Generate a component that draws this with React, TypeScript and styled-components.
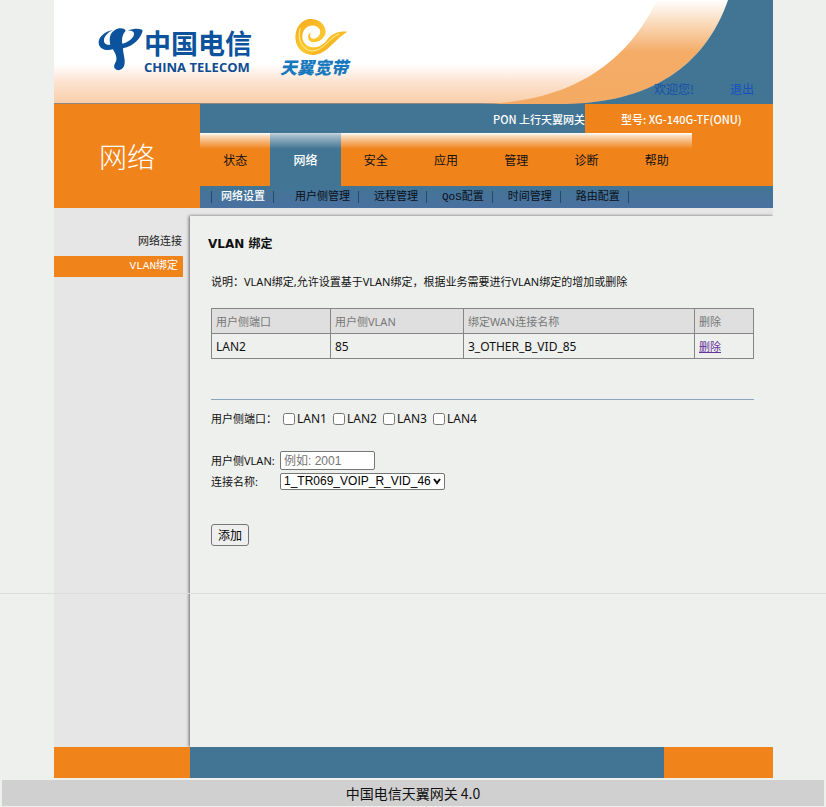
import React, { useState } from "react";
import styled, { createGlobalStyle } from "styled-components";

const orange = "#f0831a";
const blue = "#427594";
const sans = `"DejaVu Sans", "Noto Sans CJK SC", sans-serif`;
const cjk = `"Noto Sans CJK SC", sans-serif`;
const noto = `"Noto Sans", "Noto Sans CJK SC", sans-serif`;
const mono = `"Liberation Mono", "Noto Sans CJK SC", monospace`;

const GlobalStyle = createGlobalStyle`
  * { box-sizing: border-box; }
  body { margin: 0; background: #eef0ed; color: #111; font: 11px/16px ${noto}; }
`;

const Page = styled.div`
  position: relative;
  min-height: 100vh;
  display: flex;
  flex-direction: column;
`;
const FoldLine = styled.div`
  position: absolute;
  top: 593px;
  left: 0;
  right: 0;
  height: 1px;
  background: #dcdddb;
`;
const Shell = styled.div`
  flex: 1;
  display: flex;
  flex-direction: column;
  margin: 0 53px 0 54px;
`;

const Banner = styled.header`
  position: relative;
  display: flex;
  gap: 20px;
  height: 104px;
  padding-left: 41px;
  background: linear-gradient(#fff 62%, #fce3d0 80%, #f9ceaa);
  border-bottom: 1px solid #8c8884;
`;
const BannerArt = styled.svg`
  position: absolute;
  right: 0;
  top: 0;
  width: 333px;
  height: 104px;
`;
const TelecomLogo = styled.svg`
  width: 160px;
  height: 56px;
  margin-top: 24px;
`;
const BroadbandLogo = styled.svg`
  width: 80px;
  height: 66px;
  margin-top: 14px;
`;
const Account = styled.div`
  position: relative;
  display: flex;
  gap: 36px;
  margin: 80px 19px 0 auto;
  color: #1450a8;
  font: 12px/17px ${cjk};
`;
const AccountLink = styled.a`
  color: #1450c0;
  text-decoration: none;
`;

const NavArea = styled.div`
  display: grid;
  grid-template-columns: 146px 1fr;
  height: 104px;
`;
const Section = styled.div`
  display: flex;
  align-items: center;
  justify-content: center;
  background: ${orange};
  color: #fff;
  font: 300 28px/40px ${cjk};
`;
const NavColumn = styled.div`
  display: flex;
  flex-direction: column;
`;
const DeviceBar = styled.div`
  display: flex;
  height: 29px;
  background: ${blue};
  color: #fff;
  font: 500 11px/30px ${cjk};
`;
const Gateway = styled.div`
  flex: 1;
  text-align: right;
`;
const Model = styled.div`
  width: 188px;
  padding-left: 36px;
  background: ${orange};
`;
const Tabs = styled.nav`
  flex: 1;
  display: grid;
  grid-template-columns: repeat(7, 1fr);
  padding-right: 81px;
  background: ${orange};
`;
const Tab = styled.a<{ $active?: boolean }>`
  text-align: center;
  color: ${(p) => (p.$active ? "#fff" : "#111")};
  background: linear-gradient(
      ${(p) => (p.$active ? "rgba(255, 255, 255, 0.7)" : "#fff")},
      rgba(255, 255, 255, ${(p) => (p.$active ? 0.5 : 0.7)}) 3px,
      rgba(255, 255, 255, 0) 16px
    ),
    ${(p) => (p.$active ? blue : orange)};
  text-decoration: none;
  font: ${(p) => (p.$active ? 500 : 400)} 12px/53px ${cjk};
`;
const SubNav = styled.nav`
  display: flex;
  align-items: center;
  height: 22px;
  padding: 0 0 1px 11px;
  background: linear-gradient(#427594, #4a70a0);
`;
const SubLink = styled.a<{ $active?: boolean; $wide?: boolean }>`
  padding: 0 8px 0 ${(p) => (p.$active ? 9 : p.$wide ? 21 : 15)}px;
  border-right: 1px solid #26486c;
  color: ${(p) => (p.$active ? "#fff" : "#0a0f18")};
  font: ${(p) => (p.$active ? 500 : 400)} 11px/12px ${mono};
  text-decoration: none;
  &:first-child {
    border-left: 1px solid #26486c;
  }
`;

const Body = styled.div`
  flex: 1;
  display: grid;
  grid-template-columns: 136px 1fr;
  padding-top: 8px;
  background: #e6e6e6;
  overflow: hidden;
`;
const Sidebar = styled.nav`
  display: flex;
  flex-direction: column;
  gap: 3px;
  padding: 16px 7px 0 0;
`;
const SideLink = styled.a<{ $active?: boolean }>`
  padding-right: ${(p) => (p.$active ? 5 : 1)}px;
  text-align: right;
  color: ${(p) => (p.$active ? "#fff" : "#222")};
  background: ${(p) => (p.$active ? orange : "transparent")};
  font: 11px/21px ${mono};
  text-decoration: none;
`;
const Content = styled.main`
  padding: 19px 20px 0 21px;
  background: #eef0ed;
  box-shadow: -1px 0 3px #666;
`;
const Title = styled.h1`
  margin: 0 0 21px -3px;
  font: bold 12px/18px ${sans};
`;
const Intro = styled.p`
  margin: 0 0 18px;
`;
const Table = styled.table`
  width: 100%;
  border-collapse: collapse;
  table-layout: fixed;
`;
const Col = styled.col<{ $w: number }>`
  width: ${(p) => p.$w}px;
`;
const HeadCell = styled.th`
  height: 25px;
  padding: 2px 4px 0;
  border: 1px solid #858585;
  background: #dfdfdf;
  color: #777;
  text-align: left;
  font-weight: 400;
`;
const Cell = styled.td`
  height: 25px;
  padding: 1px 4px 0;
  border: 1px solid #858585;
  font-size: 12px;
`;
const DeleteLink = styled.a`
  color: #663399;
  font-size: 11px;
`;
const Rule = styled.hr`
  margin: 40px 0 11px;
  border: 0;
  border-top: 1px solid #8aa5bd;
`;
const Ports = styled.fieldset`
  display: flex;
  align-items: center;
  margin: 0 0 24px;
  padding: 0;
  border: 0;
`;
const PortsLegend = styled.span`
  width: 72px;
`;
const PortLabel = styled.label`
  display: flex;
  align-items: center;
  gap: 2px;
  width: 50px;
  font-size: 12px;
`;
const Check = styled.input`
  width: 12px;
  height: 12px;
  margin: 0;
`;
const Field = styled.div`
  display: flex;
  align-items: center;
  height: 19px;
  margin-bottom: 2px;
`;
const FieldLabel = styled.label`
  width: 69px;
`;
const TextBox = styled.input`
  width: 95px;
  height: 19px;
  padding: 0 3px;
  border: 1px solid #767676;
  border-radius: 2px;
  background: #fff;
  font: 12px "Liberation Sans", "Noto Sans CJK SC", sans-serif;
`;
const SelectBox = styled.div`
  position: relative;
  display: flex;
`;
const Select = styled.select`
  appearance: none;
  width: 165px;
  height: 17px;
  padding: 0 0 0 3px;
  border: 1px solid #767676;
  border-radius: 2px;
  background: #fff;
  color: #000;
  font: 12px/15px "Liberation Sans", sans-serif;
`;
const Chevron = styled.svg`
  position: absolute;
  right: 4px;
  top: 5px;
  width: 8px;
  height: 7px;
  pointer-events: none;
`;
const AddButton = styled.button`
  display: block;
  width: 38px;
  height: 22px;
  margin-top: 33px;
  padding: 0;
  border: 1px solid #767676;
  border-radius: 3px;
  background: #efefef;
  color: #000;
  font: 12px/20px ${cjk};
`;

const Strip = styled.div`
  display: grid;
  grid-template-columns: 136px 1fr 109px;
  height: 31px;
  background: ${blue};
`;
const StripEnd = styled.div`
  background: ${orange};
  &:last-child {
    grid-column: 3;
  }
`;
const Footer = styled.footer`
  margin: 2px 2px 1px;
  background: #d0d0d0;
  text-align: center;
  font: 14px/26px ${cjk};
`;

const tabs = ["状态", "网络", "安全", "应用", "管理", "诊断", "帮助"];
const subItems = ["网络设置", "用户侧管理", "远程管理", "QoS配置", "时间管理", "路由配置"];
const ports = ["LAN1", "LAN2", "LAN3", "LAN4"];

function Logos() {
  return (
    <>
      <TelecomLogo viewBox="0 0 160 56" role="img" aria-label="中国电信 China Telecom">
        <path
          transform="scale(.3333)"
          fill="#0d529c"
          d="M54 18C28 22 10 40 11 57C12 76 34 82 54 76C60 88 66 96 64 108C62 118 54 124 59 133C67 143 84 139 88 124C92 106 84 90 84 73C116 66 138 42 143 20C140 13 120 12 98 19C114 20 120 25 116 35C111 46 98 55 82 59C80 44 82 32 92 20C88 11 70 11 60 18C44 28 42 44 46 62C34 64 26 58 27 47C28 36 40 24 54 18Z"
        />
        <text x="49" y="30" fontSize="27" fontWeight="700" fill="#0d529c" fontFamily="Noto Sans CJK SC, sans-serif">
          中国电信
        </text>
        <text x="49" y="48" fontSize="13" fontWeight="700" fill="#0d4c90" fontFamily="Open Sans, sans-serif">
          CHINA TELECOM
        </text>
      </TelecomLogo>
      <BroadbandLogo viewBox="0 0 80 66" role="img" aria-label="天翼宽带">
        <defs>
          <linearGradient id="swirl" x1="0" y1="0" x2="1" y2="1">
            <stop offset="0" stopColor="#f6a81c" />
            <stop offset=".5" stopColor="#fcc82e" />
            <stop offset="1" stopColor="#f29a12" />
          </linearGradient>
        </defs>
        <g transform="scale(.3333)">
          <path
            fill="url(#swirl)"
            d="M217 53C195 50 170 58 158 75C146 93 128 103 108 99C85 94 76 70 86 50C96 32 124 28 134 46C140 60 128 76 114 74C104 72 102 60 110 56C98 56 96 72 104 80C118 92 148 80 152 55C152 28 125 10 98 16C70 23 56 55 63 85C70 112 95 126 122 122C160 115 180 75 217 53Z"
          />
          <path
            fill="none"
            stroke="#fff0a0"
            strokeWidth="3"
            d="M76 42C64 76 84 110 112 111C146 109 158 76 192 60"
          />
        </g>
        <text
          x="5"
          y="60"
          fontSize="17"
          fontWeight="900"
          fontStyle="italic"
          fill="#1878bd"
          fontFamily="Noto Sans CJK SC, sans-serif"
        >
          天翼宽带
        </text>
      </BroadbandLogo>
    </>
  );
}

export default function App() {
  const [vlan, setVlan] = useState("");
  return (
    <>
      <GlobalStyle />
      <Page>
        <Shell>
          <Banner>
            <BannerArt viewBox="0 0 333 104" aria-hidden="true">
              <defs>
                <linearGradient id="band" x1="0" y1="0" x2="0" y2="1">
                  <stop offset="0" stopColor="#fff" />
                  <stop offset=".25" stopColor="#fad6b3" />
                  <stop offset=".5" stopColor="#f4ac67" />
                  <stop offset="1" stopColor="#f4aa62" />
                </linearGradient>
              </defs>
              <path fill="url(#band)" d="M217 0C190 56 140 102 40 104H127C220 102 268 58 288 0Z" />
              <path fill={blue} d="M333 0H288C268 58 220 102 127 104H333Z" />
            </BannerArt>
            <Logos />
            <Account>
              <span>欢迎您!</span>
              <AccountLink href="#logout">退出</AccountLink>
            </Account>
          </Banner>

          <NavArea>
            <Section>网络</Section>
            <NavColumn>
              <DeviceBar>
                <Gateway>PON 上行天翼网关</Gateway>
                <Model>型号: XG-140G-TF(ONU)</Model>
              </DeviceBar>
              <Tabs>
                {tabs.map((t, i) => (
                  <Tab key={t} href="#tab" $active={i === 1}>
                    {t}
                  </Tab>
                ))}
              </Tabs>
              <SubNav>
                {subItems.map((t, i) => (
                  <SubLink key={t} href="#sub" $active={i === 0} $wide={i === 1}>
                    {t}
                  </SubLink>
                ))}
              </SubNav>
            </NavColumn>
          </NavArea>

          <Body>
            <Sidebar>
              <SideLink href="#connection">网络连接</SideLink>
              <SideLink href="#vlan" $active>
                VLAN绑定
              </SideLink>
            </Sidebar>
            <Content>
              <Title>VLAN 绑定</Title>
              <Intro>说明：VLAN绑定,允许设置基于VLAN绑定，根据业务需要进行VLAN绑定的增加或删除</Intro>
              <Table>
                <colgroup>
                  <Col $w={119} />
                  <Col $w={133} />
                  <Col $w={231} />
                  <Col $w={59} />
                </colgroup>
                <thead>
                  <tr>
                    <HeadCell>用户侧端口</HeadCell>
                    <HeadCell>用户侧VLAN</HeadCell>
                    <HeadCell>绑定WAN连接名称</HeadCell>
                    <HeadCell>删除</HeadCell>
                  </tr>
                </thead>
                <tbody>
                  <tr>
                    <Cell>LAN2</Cell>
                    <Cell>85</Cell>
                    <Cell>3_OTHER_B_VID_85</Cell>
                    <Cell>
                      <DeleteLink href="#delete">删除</DeleteLink>
                    </Cell>
                  </tr>
                </tbody>
              </Table>
              <Rule />
              <Ports aria-labelledby="ports-label">
                <PortsLegend id="ports-label">用户侧端口：</PortsLegend>
                {ports.map((p) => (
                  <PortLabel key={p}>
                    <Check type="checkbox" />
                    {p}
                  </PortLabel>
                ))}
              </Ports>
              <Field>
                <FieldLabel htmlFor="vlan">用户侧VLAN:</FieldLabel>
                <TextBox
                  id="vlan"
                  placeholder="例如: 2001"
                  value={vlan}
                  onChange={(e) => setVlan(e.target.value)}
                />
              </Field>
              <Field>
                <FieldLabel htmlFor="wan">连接名称:</FieldLabel>
                <SelectBox>
                  <Select id="wan">
                    <option>1_TR069_VOIP_R_VID_46</option>
                  </Select>
                  <Chevron viewBox="0 0 8 7" aria-hidden="true">
                    <path d="M1 1l3 4 3-4" fill="none" stroke="#111" strokeWidth="2" />
                  </Chevron>
                </SelectBox>
              </Field>
              <AddButton type="button">添加</AddButton>
            </Content>
          </Body>
          <Strip>
            <StripEnd />
            <StripEnd />
          </Strip>
        </Shell>
        <Footer>中国电信天翼网关 4.0</Footer>
        <FoldLine />
      </Page>
    </>
  );
}
